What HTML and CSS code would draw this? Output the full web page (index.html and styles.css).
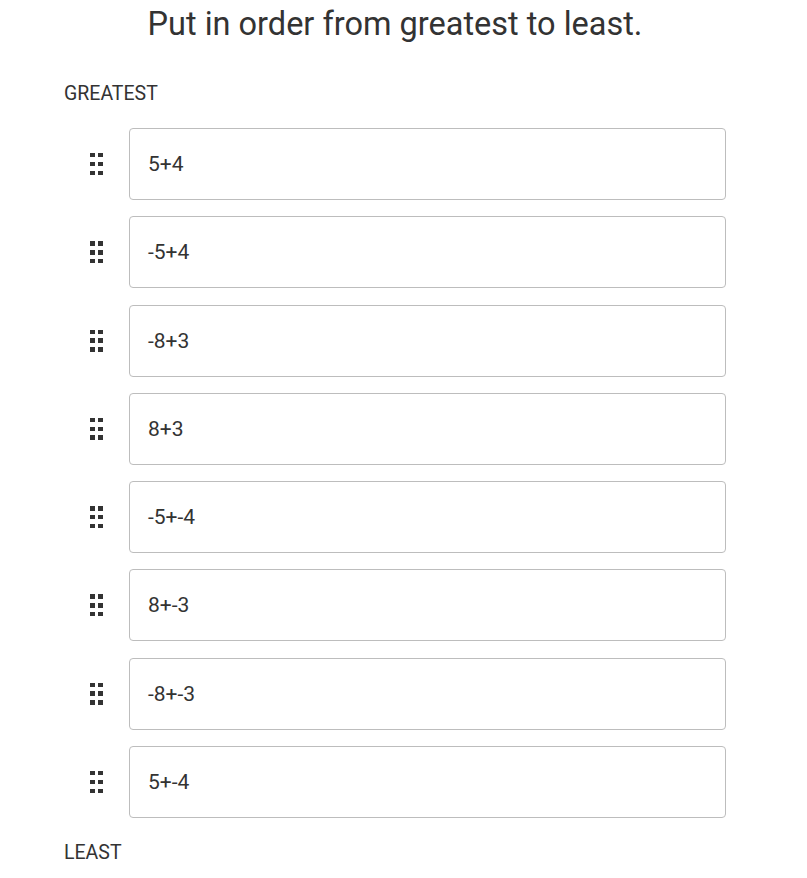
FILE: index.html
```html
<!DOCTYPE html>
<html lang="en">
<head>
<meta charset="utf-8">
<title>Order</title>
<link rel="stylesheet" href="styles.css">
</head>
<body>
<div class="page">
  <h1 class="title">Put in order from greatest to least.</h1>
  <div class="label label-top">GREATEST</div>
  <ul class="list">
    <li class="row"><span class="handle"><i></i><i></i><i></i><i></i><i></i><i></i></span><div class="card">5+4</div></li>
    <li class="row"><span class="handle"><i></i><i></i><i></i><i></i><i></i><i></i></span><div class="card">-5+4</div></li>
    <li class="row"><span class="handle"><i></i><i></i><i></i><i></i><i></i><i></i></span><div class="card">-8+3</div></li>
    <li class="row"><span class="handle"><i></i><i></i><i></i><i></i><i></i><i></i></span><div class="card">8+3</div></li>
    <li class="row"><span class="handle"><i></i><i></i><i></i><i></i><i></i><i></i></span><div class="card">-5+-4</div></li>
    <li class="row"><span class="handle"><i></i><i></i><i></i><i></i><i></i><i></i></span><div class="card">8+-3</div></li>
    <li class="row"><span class="handle"><i></i><i></i><i></i><i></i><i></i><i></i></span><div class="card">-8+-3</div></li>
    <li class="row"><span class="handle"><i></i><i></i><i></i><i></i><i></i><i></i></span><div class="card">5+-4</div></li>
  </ul>
  <div class="label label-bottom">LEAST</div>
</div>
</body>
</html>
```

FILE: styles.css
```css
html, body {
  margin: 0;
  padding: 0;
  background: #fff;
}
body {
  font-family: Roboto, "Liberation Sans", sans-serif;
  color: #333;
}
.page {
  width: 662px;
  margin-left: 64px;
}
.title {
  margin: 0;
  padding-top: 4px;
  font-size: 32.5px;
  font-weight: 400;
  line-height: 40px;
  text-align: center;
  color: #333;
}
.label {
  font-size: 19.5px;
  line-height: 24px;
  color: #333;
}
.label-top {
  margin-top: 38px;
}
.label-bottom {
  margin-top: 23px;
}
.list {
  list-style: none;
  margin: 22px 0 0 0;
  padding: 0;
  display: flex;
  flex-direction: column;
  gap: 16.29px;
}
.row {
  display: flex;
  align-items: center;
}
.handle {
  display: grid;
  grid-template-columns: 4.5px 4.5px;
  grid-template-rows: 4.5px 4.5px 4.5px;
  column-gap: 3.5px;
  row-gap: 4.3px;
  justify-content: center;
  align-content: center;
  width: 65px;
}
.handle i {
  display: block;
  background: #333;
}
.card {
  flex: 1;
  box-sizing: border-box;
  height: 72px;
  border: 1px solid #bdbdbd;
  border-radius: 4px;
  padding: 0 18px;
  display: flex;
  align-items: center;
  font-size: 21px;
  color: #333;
}
```
